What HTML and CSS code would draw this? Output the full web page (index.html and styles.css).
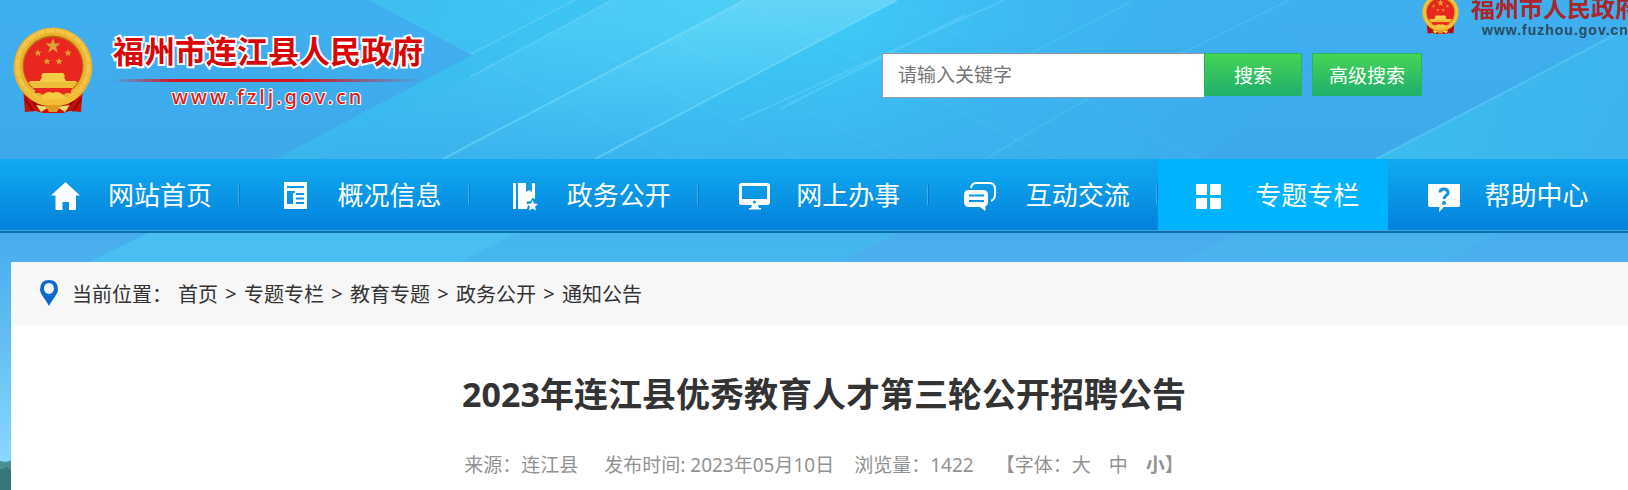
FILE: index.html
```html
<!DOCTYPE html>
<html lang="zh-CN">
<head>
<meta charset="utf-8">
<title>2023年连江县优秀教育人才第三轮公开招聘公告</title>
<link rel="stylesheet" href="styles.css">
</head>
<body>
<svg class="sky" viewBox="0 0 1628 490" preserveAspectRatio="none" aria-hidden="true">
  <defs>
    <linearGradient id="base" x1="0" y1="0" x2="0" y2="1">
      <stop offset="0" stop-color="#40aff0"/><stop offset=".32" stop-color="#3da9eb"/>
      <stop offset=".5" stop-color="#49aeed"/><stop offset=".7" stop-color="#62bff3"/><stop offset=".94" stop-color="#88d7ff"/>
    </linearGradient>
    <linearGradient id="cyan" gradientUnits="userSpaceOnUse" x1="300" y1="0" x2="1300" y2="160">
      <stop offset="0" stop-color="#3dbcef"/><stop offset=".4" stop-color="#3ecaf6"/><stop offset=".55" stop-color="#3dc8f6"/><stop offset="1" stop-color="#3eaeee" stop-opacity="0"/>
    </linearGradient>
    <linearGradient id="shade" x1="0" y1="0" x2="0" y2="1">
      <stop offset=".2" stop-color="#3aaeec" stop-opacity="0"/><stop offset="1" stop-color="#3aaeec" stop-opacity=".75"/>
    </linearGradient>
    <linearGradient id="beam" x1="0" y1="0" x2="0" y2="1">
      <stop offset="0" stop-color="#8be0f8" stop-opacity=".5"/><stop offset="1" stop-color="#5bd0f6" stop-opacity="0"/>
    </linearGradient>
    <linearGradient id="ray" x1="0" y1="0" x2="1" y2="0">
      <stop offset="0" stop-color="#3cbfee" stop-opacity=".9"/><stop offset="1" stop-color="#3cbcee" stop-opacity=".5"/>
    </linearGradient>
  </defs>
  <rect width="1628" height="490" fill="url(#base)"/>
  <path d="M370 0H1400L1200 159H276L472 55z" fill="url(#cyan)"/>
  <path d="M370 0H1400L1200 159H276L472 55z" fill="url(#shade)"/>
  <path d="M276 159 575 0 612 0 318 159z" fill="#3cc0ee" opacity=".3"/>
  <path d="M443 159 745 0 897 0 595 159z" fill="url(#beam)"/>
  <path d="M443 159 745 0 612 0 318 159z" fill="url(#beam)" opacity=".4"/>
  <g fill="none" stroke="#8be5fb">
    <path d="M370 0 690 169M505 0 800 159M600 0 900 159M740 0 1056 159M890 0 1200 159" opacity=".15"/>
    <path d="M471 54 575 0M470 77 612 0M780 109 965 15M740 120 1004 0" stroke-width="2" opacity=".25"/>
    <path d="M443 159 745 0M595 159 897 0" stroke-width="2" opacity=".4"/>
    <path d="M1030 54 1130 2M985 159 1090 97M1180 54 1290 0" stroke="#45cdf7" stroke-width="2" opacity=".4"/>
  </g>
  <path d="M1376 159 1628 28 1628 159z" fill="url(#ray)"/>
  <path d="M1376 159 1628 28" stroke="#5acdf7" stroke-width="2" opacity=".6"/>
  <path d="M90 262 150 232 520 232 460 262z" fill="#4bc4f2" opacity=".7"/>
  <path d="M460 262 520 232 900 232 840 262z" fill="#45b9ee" opacity=".7"/>
  <path d="M1180 262 1240 232 1500 232 1440 262z" fill="#45c0ee" opacity=".3"/>
  <path d="M0 461 6 462 12 460V490H0z" fill="#4a8f93"/>
  <path d="M0 470 7 467 12 471V490H0z" fill="#35777a"/>
  <symbol id="emblem" viewBox="0 0 80 86">
    <path d="M10 60 12 85 23 84 30 86H50L57 84 68 85 70 60z" fill="#c80f0c"/>
    <path d="M12 72 20 84M68 72 60 84M17 70 26 82M63 70 54 82" stroke="#8e0907" stroke-width="2"/>
    <circle cx="40" cy="40" r="39.500" fill="#eab32f"/>
    <circle cx="40" cy="39" r="35.500" fill="none" stroke="#f4c548" stroke-width="4" stroke-dasharray="9 1"/>
    <circle cx="40" cy="39" r="30.500" fill="#b67710"/>
    <circle cx="40" cy="39.500" r="29.500" fill="#e9271f"/>
    <path id="star" d="M40 11l1.900 5.500 5.600.1-4.500 3.400 1.600 5.500-4.600-3.300-4.600 3.300 1.600-5.500-4.500-3.400 5.600-.1z" fill="#dda338"/>
    <use href="#star" transform="translate(5 16.500) scale(.5)"/>
    <use href="#star" transform="translate(35 16.500) scale(.5)"/>
    <use href="#star" transform="translate(14 25) scale(.5)"/>
    <use href="#star" transform="translate(26 25) scale(.5)"/>
    <path d="M30 46 50 46 52 49 51 50 53 54H63V57H17V54H27L29 50 28 49z" fill="#f7cf45"/>
    <path d="M15 55H65L60 61H20z" fill="#efbc37"/>
    <path d="M22 61H58V66H22z" fill="#e9271f"/>
    <path d="M13 60C20 70 28 73 40 73S60 70 67 60L65 69C58 77 50 79 40 79S22 77 15 69z" fill="#f2bd35"/>
    <path d="M28 70Q34 63 40 66 46 63 52 70 46 74 40 72 34 74 28 70z" fill="#f6cb42"/>
    <path d="M23 78 36 80 28 85zM57 78 44 80 52 85z" fill="#f8dc72"/>
    <path d="M32 78H48L44 85H36z" fill="#df9c21"/>
  </symbol>
</svg>

<header class="header">
  <a class="brand" href="#">
    <svg class="brand-emblem" aria-hidden="true"><use href="#emblem"/></svg>
    <span class="brand-text">
      <span class="brand-name">福州市连江县人民政府</span>
      <span class="brand-rule"></span>
      <span class="brand-url">www.fzlj.gov.cn</span>
    </span>
  </a>
  <form class="search">
    <input class="search-input" type="text" aria-label="搜索关键字" placeholder="请输入关键字">
    <button class="search-button" type="submit">搜索</button>
    <button class="search-button search-advanced" type="button">高级搜索</button>
  </form>
  <a class="parent" href="#">
    <svg class="parent-emblem" aria-hidden="true"><use href="#emblem"/></svg>
    <span class="parent-text">
      <span class="parent-name">福州市人民政府</span>
      <span class="parent-url">www.fuzhou.gov.cn</span>
    </span>
  </a>
</header>

<nav class="nav">
  <a class="nav-item" href="#">
    <svg class="nav-icon" viewBox="0 0 36 30"><path d="M18.500 0 33 13.500H29V27Q29 28 28 28H22V20H15.500V28H9.500Q8.500 28 8.500 27V13.500H4z"/></svg>
    <span>网站首页</span></a>
  <a class="nav-item" href="#">
    <svg class="nav-icon" viewBox="0 0 36 30"><path fill-rule="evenodd" d="M8 0H31V27H8zM11 4V6H28V4zM11 9V22H17V11H19V9zM20 11V13H28V11zM20 15.500V17.500H28V15.500zM20 20V22H28V20z"/></svg>
    <span>概况信息</span></a>
  <a class="nav-item" href="#">
    <svg class="nav-icon" viewBox="0 0 36 30"><path d="M7 1H10V27H7zM12 1H20V10L23 8 26 10V1H29V17L26.500 16 24.500 19 20 20 22 23 21 27H12z"/><path d="M26.500 18 28 21.500 32 22 29 24.500 30 28.500 26.500 26.500 23 28.500 23.800 24.500 21 22 25 21.500z"/></svg>
    <span>政务公开</span></a>
  <a class="nav-item" href="#">
    <svg class="nav-icon" viewBox="0 0 36 30"><path fill-rule="evenodd" d="M7 1H32Q35 1 35 4V20Q35 23 32 23H23L24 26H26V27.500H14V26H16L17 23H7Q4 23 4 20V4Q4 1 7 1zM7 4V17H32V4zM19.500 18.500a1.500 1.500 0 1 0 .01 0z"/></svg>
    <span>网上办事</span></a>
  <a class="nav-item" href="#">
    <svg class="nav-icon" viewBox="0 0 36 30"><path fill="none" stroke="#fff" stroke-width="2" d="M6 6Q7 1 11 1H24Q30 1 30 7V13Q30 17 26 19"/><path fill-rule="evenodd" d="M4 8H18Q23 8 23 13V20Q23 23 20.500 24V29L15 25H4Q-1 25-1 20V13Q-1 8 4 8zM4 12.500V14.500H19V12.500zM4 18V20H19V18z"/></svg>
    <span>互动交流</span></a>
  <a class="nav-item nav-item-active" href="#" aria-current="page">
    <svg class="nav-icon" viewBox="0 0 36 30"><rect x="2" y="2" width="11" height="11" rx="1"/><rect x="16" y="2" width="11" height="11" rx="1"/><rect x="2" y="16" width="11" height="11" rx="1"/><rect x="16" y="16" width="11" height="11" rx="1"/></svg>
    <span>专题专栏</span></a>
  <a class="nav-item" href="#">
    <svg class="nav-icon" viewBox="0 0 36 30"><path d="M4 2H36V21Q37 25 34 25H20L15 30 15.500 25H6Q4 25 4 23V3z"/><path fill="none" stroke="#0f93e2" stroke-width="3" d="M16 10.500Q16 7 20 7T24 11C24 14 20 13 20 17"/><circle cx="20" cy="21" r="2" fill="#0f93e2"/></svg>
    <span>帮助中心</span></a>
</nav>

<main class="content">
  <div class="crumbs">
    <svg class="pin" viewBox="0 0 18 26" aria-hidden="true"><path fill="#0b6acb" fill-rule="evenodd" d="M9 0Q18 0 18 9.500C18 14 12 20 9 26 6 20 0 14 0 9.500Q0 0 9 0zM9 3C5.500 3 4 6 4 8.500S6 14 9 14 14 11 14 8.500 12.500 3 9 3z"/></svg>
    <span>当前位置：</span>
    <a href="#">首页</a><i>&gt;</i><a href="#">专题专栏</a><i>&gt;</i><a href="#">教育专题</a><i>&gt;</i><a href="#">政务公开</a><i>&gt;</i><a href="#">通知公告</a>
  </div>
  <article class="article">
    <h1 class="title">2023年连江县优秀教育人才第三轮公开招聘公告</h1>
    <div class="meta">
      <span class="meta-source">来源：连江县</span>
      <span class="meta-date">发布时间: 2023年05月10日</span>
      <span class="meta-views">浏览量：1422</span>
      <span class="sizes">【字体：<button type="button">大</button><button type="button">中</button><button type="button" class="size-current">小</button>】</span>
    </div>
  </article>
</main>
</body>
</html>
```
FILE: styles.css
```css
* { box-sizing: border-box; }

body {
  margin: 0;
  min-height: 100vh;
  display: flex;
  flex-direction: column;
  overflow: hidden;
  font-family: "Noto Sans", "Noto Sans CJK SC", sans-serif;
  color: #333;
}

a { color: inherit; text-decoration: none; }
button, input { font: inherit; }

.sky {
  position: absolute;
  inset: 0;
  width: 100%;
  height: 100%;
  z-index: -1;
}

/* Header */
.header {
  display: flex;
  align-items: flex-start;
  height: 159px;
  padding-left: 13px;
}

.brand {
  display: flex;
  gap: 20px;
  padding-top: 27px;
}
.brand-emblem { width: 80px; height: 86px; }
.brand-text {
  display: flex;
  flex-direction: column;
  align-items: center;
}
.brand-name {
  font: bold 31px/46px "Noto Sans CJK SC", sans-serif;
  color: #d80606;
  -webkit-text-stroke: 4px #fff;
  paint-order: stroke fill;
}
.brand-rule {
  width: 100%;
  height: 3px;
  margin-top: 6px;
  background: linear-gradient(90deg, transparent, #d8141c 20%, #d8141c 60%, transparent);
}
.brand-url {
  font-size: 20px;
  font-weight: 500;
  line-height: 30px;
  letter-spacing: 3px;
  color: #e01a1a;
  -webkit-text-stroke: 2px #fff;
  paint-order: stroke fill;
}

.search {
  display: flex;
  align-items: flex-start;
  margin-left: auto;
  padding-top: 53px;
  font-size: 19px;
}
.search-input {
  width: 322px;
  height: 45px;
  padding: 0 15px 2px;
  border: 1px solid #999;
  border-right: 0;
  border-radius: 0;
  background: #fff;
  color: #333;
}
.search-input::placeholder { color: #757575; opacity: 1; }
.search-button {
  width: 98px;
  height: 43px;
  padding: 0;
  border: 1px solid #26b562;
  background: linear-gradient(#46d455, #20af6c);
  color: #fff;
}
.search-advanced { width: 110px; margin-left: 10px; }

.parent {
  display: flex;
  gap: 12px;
  width: 206px;
  height: 40px;
  overflow: hidden;
}
.parent-emblem { flex: none; width: 37px; height: 40px; margin-top: -6px; }
.parent-text { flex: none; display: flex; flex-direction: column; }
.parent-name {
  margin-top: -9px;
  font: bold 24px/32px "Noto Sans CJK SC", sans-serif;
  color: #a9262b;
}
.parent-url {
  padding-left: 11px;
  font: bold 14px/14px "Liberation Sans", sans-serif;
  letter-spacing: 1px;
  color: #294c63;
}

/* Main navigation */
.nav {
  display: grid;
  grid-template-columns: repeat(7, 1fr);
  height: 74px;
  padding: 0 11px;
  border-bottom: 2px solid #0b6fae;
  background: linear-gradient(#12a9f0, #0ea3ec 20%, #0281db 98%, #3fa6e4 99%);
  font-size: 26px;
  color: #fff;
}
.nav-item {
  display: flex;
  align-items: center;
  gap: 25px;
  height: 71px;
  padding: 0 0 2px 36px;
  background: linear-gradient(90deg, #41aee8 50%, #0777c4 50%) right 0 top 26px / 2px 20px no-repeat;
}
.nav-item:last-child { background: none; }
.nav-item-active { background: #00b3ff; }
.nav-icon { width: 36px; height: 30px; margin-top: 6px; fill: #fff; overflow: visible; }

/* Page content */
.content {
  flex: 1;
  margin: 29px 0 0 11px;
  background: #fff;
}
.crumbs {
  display: flex;
  align-items: center;
  height: 63px;
  padding-left: 29px;
  background: #f7f7f7;
  font-size: 20px;
}
.crumbs i { width: 26px; text-align: center; font-style: normal; }
.crumbs span { margin: 0 6px 0 14px; }
.pin { width: 18px; height: 26px; margin-bottom: 2px; }

.article { padding-left: 9px; }
.title {
  margin: 46px 0 0;
  font-size: 34px;
  line-height: 46px;
  text-align: center;
}
.meta {
  display: flex;
  justify-content: center;
  margin-top: 34px;
  font-size: 19px;
  line-height: 28px;
  color: #929292;
}
.meta-date { margin-left: 26px; }
.meta-views { margin-left: 20px; }
.sizes { margin-left: 22px; }
.sizes button {
  margin-right: 18px;
  padding: 0;
  border: 0;
  background: none;
  color: inherit;
}
.sizes .size-current { margin-right: 0; font-weight: bold; }
```
